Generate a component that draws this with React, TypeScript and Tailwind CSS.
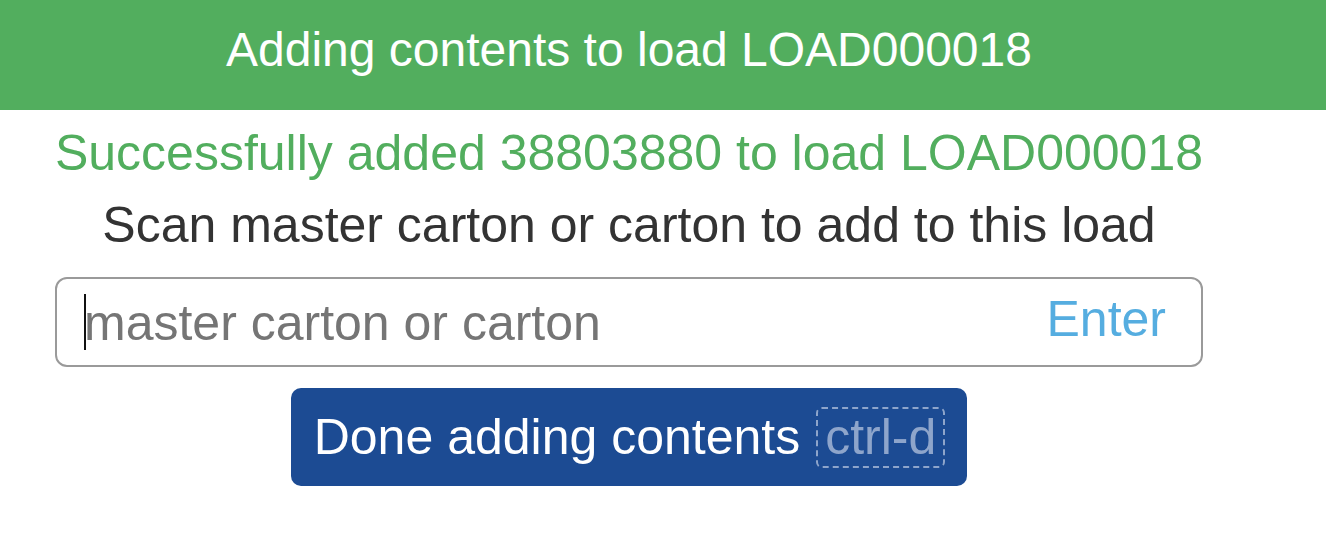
import React from "react";

export default function App() {
  return (
    <div className="w-full bg-white" style={{ fontFamily: '"Liberation Sans", Arial, Helvetica, sans-serif' }}>
      <div className="w-full h-[110px] bg-[#52ae5e]">
        <div className="w-[1258px] pt-[23px] text-center text-white text-[48px] leading-[54px]">
          Adding contents to load LOAD000018
        </div>
      </div>
      <div className="w-[1258px] flex flex-col items-center">
        <div className="mt-[15px] text-[50px] leading-[56px] text-[#52ae5e]">
          Successfully added 38803880 to load LOAD000018
        </div>
        <div className="mt-[16px] text-[50px] leading-[56px] text-[#333333]">
          Scan master carton or carton to add to this load
        </div>
        <div className="mt-[24px] w-[1148px] h-[90px] border-2 border-[#9a9a9a] rounded-[12px] flex items-start justify-between pl-[27px] pr-[35px]">
          <div className="relative mt-[16px] text-[50px] leading-[56px] text-[#757575]">
            <span className="absolute left-0 top-[-1px] w-[2px] h-[56px] bg-[#111]" />
            master carton or carton
          </div>
          <div className="mt-[12px] text-[50px] leading-[56px] text-[#55ade0]">Enter</div>
        </div>
        <button className="mt-[21px] h-[98px] pl-[23px] pr-[22px] bg-[#1c4b93] rounded-[10px] flex items-center text-white text-[50px] leading-[56px]">
          <span>Done adding contents</span>
          <span className="ml-[16px] inline-block border-2 border-dashed border-[#8ea5cb] rounded-[6px] px-[7px] text-[#8ea5cb] leading-[57px]">
            ctrl-d
          </span>
        </button>
      </div>
    </div>
  );
}
